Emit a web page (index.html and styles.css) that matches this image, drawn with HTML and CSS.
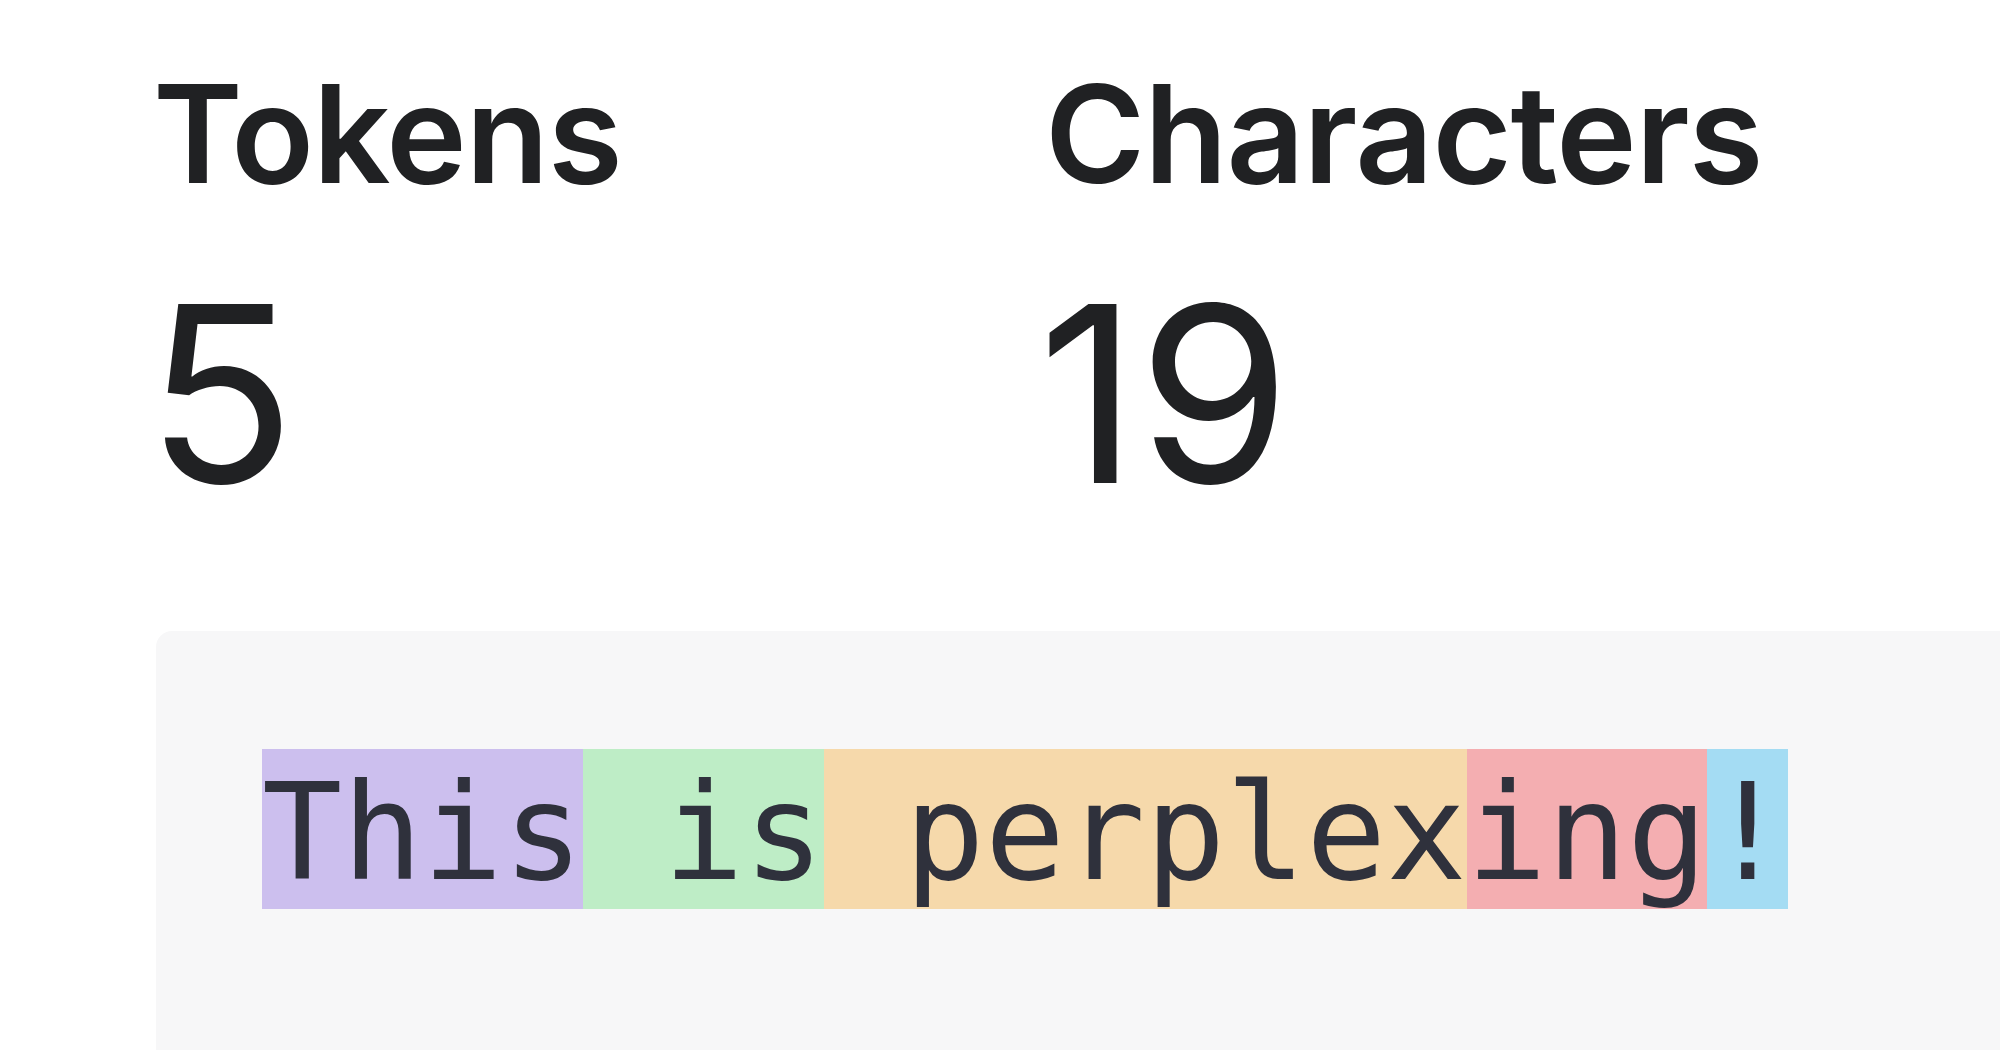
FILE: index.html
```html
<!DOCTYPE html>
<html lang="en">
<head>
<meta charset="utf-8">
<title>Tokenizer</title>
<link rel="stylesheet" href="styles.css">
</head>
<body>
<main class="page">
  <section class="stats">
    <div class="stat">
      <div class="stat-label">Tokens</div>
      <div class="stat-value">5</div>
    </div>
    <div class="stat">
      <div class="stat-label">Characters</div>
      <div class="stat-value">19</div>
    </div>
  </section>
  <section class="output">
    <div class="token-line"><span class="tok tok-purple">This</span><span class="tok tok-green"> is</span><span class="tok tok-orange"> perplex</span><span class="tok tok-red">ing</span><span class="tok tok-blue">!</span></div>
  </section>
</main>
</body>
</html>
```
FILE: styles.css
```css
html, body {
  margin: 0;
  padding: 0;
  background: #ffffff;
  overflow: hidden;
}

.page {
  width: 2000px;
  height: 1050px;
  padding: 52px 0 0 153px;
  box-sizing: border-box;
  font-family: Inter, "Noto Sans", sans-serif;
  color: #202123;
}

.stats {
  display: flex;
}

.stat {
  width: 892px;
}

.stat-label {
  font-size: 136px;
  line-height: 164px;
  font-weight: 600;
  letter-spacing: -1px;
}

.stat-value {
  margin-top: 56px;
  margin-left: -7px;
  font-size: 246px;
  line-height: 243px;
  font-weight: 400;
  letter-spacing: 0;
}

.output {
  margin-top: 116px;
  margin-left: 3px;
  width: 2100px;
  height: 600px;
  background: #f7f7f8;
  border-radius: 16px;
  padding: 118px 0 0 106px;
  box-sizing: border-box;
}

.token-line {
  display: flex;
  font-family: "DejaVu Sans Mono", "Liberation Mono", monospace;
  font-size: 133.4px;
  color: #2f313c;
}

.tok {
  display: block;
  white-space: pre;
  height: 160px;
  line-height: 168px;
}

.tok-purple { background: rgba(107, 64, 216, 0.3); }
.tok-green  { background: rgba(104, 222, 122, 0.4); }
.tok-orange { background: rgba(244, 172, 54, 0.4); }
.tok-red    { background: rgba(239, 65, 70, 0.4); }
.tok-blue   { background: rgba(39, 181, 234, 0.4); }
```
